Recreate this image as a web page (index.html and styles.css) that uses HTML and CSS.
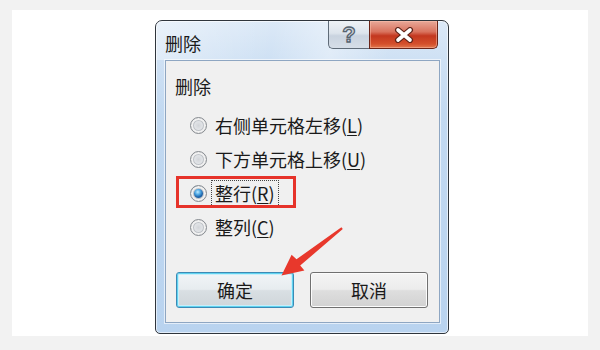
FILE: index.html
```html
<!DOCTYPE html>
<html lang="zh-CN">
<head>
    <meta charset="UTF-8">
    <meta name="viewport" content="width=device-width, initial-scale=1.0">
    <title>删除</title>
    <link rel="stylesheet" href="styles.css">
</head>
<body>
    <div class="card">
        <div class="dialog">
            <div class="titlebar">
                <span class="title">删除</span>
                <div class="caption-buttons">
                    <span class="cap-btn help">?</span>
                    <span class="cap-btn close">
                        <svg width="20" height="16" viewBox="0 0 20 16">
                            <path d="M4 3 L16 13 M16 3 L4 13" stroke="#5e2318" stroke-width="6" stroke-linecap="round"/>
                            <path d="M4 3 L16 13 M16 3 L4 13" stroke="#fff" stroke-width="3.6" stroke-linecap="round"/>
                        </svg>
                    </span>
                </div>
            </div>
            <div class="panel">
                <div class="group-label">删除</div>
                <div class="options">
                    <label class="option"><span class="radio"></span><span class="text">右侧单元格左移(<u>L</u>)</span></label>
                    <label class="option"><span class="radio"></span><span class="text">下方单元格上移(<u>U</u>)</span></label>
                    <label class="option marked"><span class="radio checked"></span><span class="text focused">整行(<u>R</u>)</span></label>
                    <label class="option"><span class="radio"></span><span class="text">整列(<u>C</u>)</span></label>
                </div>
                <div class="buttons">
                    <button class="btn default">确定</button>
                    <button class="btn">取消</button>
                </div>
            </div>
        </div>
    </div>

    <!-- annotation arrow drawn over the screenshot -->
    <svg class="arrow" width="600" height="350" viewBox="0 0 600 350">
        <polygon points="341.4,227.2 296.5,259.3 291.6,254.8 281.5,275.5 304.4,270.4 300.2,265.6 342.8,228.9" fill="#e8382c"/>
    </svg>
</body>
</html>
```

FILE: styles.css
```css
body {
    margin: 0;
    padding: 0;
    background: #f2f2f2;
    font-family: "Noto Sans CJK SC", "Liberation Sans", sans-serif;
    color: #1a1a1a;
    position: relative;
    height: 350px;
    overflow: hidden;
}
.card {
    margin: 10px 12px 0 12px;
    height: 326px;
    background: #fff;
    padding-top: 10px;
    box-sizing: border-box;
}
.dialog {
    margin-left: 143px;
    width: 294px;
    height: 314px;
    box-sizing: border-box;
    border: 1px solid #2f353c;
    border-radius: 7px 7px 5px 5px;
    background: linear-gradient(180deg, #dce9f7 0%, #cfe1f4 12%, #c2d9f1 30%, #b9d3ef 100%);
    box-shadow: inset 0 0 0 1px rgba(255, 255, 255, 0.6);
    display: flex;
    flex-direction: column;
}
.titlebar {
    height: 39px;
    display: flex;
    justify-content: space-between;
    align-items: flex-start;
    padding-left: 9px;
    padding-right: 10px;
    background: linear-gradient(100deg, rgba(255,255,255,0.4) 0%, rgba(255,255,255,0) 40%, rgba(255,255,255,0.35) 60%, rgba(255,255,255,0) 80%);
    border-radius: 6px 6px 0 0;
}
.title {
    font-size: 18px;
    line-height: 24px;
    padding-top: 10px;
}
.caption-buttons {
    display: flex;
}
.cap-btn {
    height: 28px;
    display: flex;
    align-items: center;
    justify-content: center;
    box-sizing: border-box;
    border: 1px solid #5f6b78;
    border-top: none;
}
.help {
    width: 41px;
    border-radius: 0 0 0 5px;
    border-right: none;
    background: linear-gradient(180deg, #eef2f6 0%, #dde4ec 45%, #c9d3df 55%, #d6dee8 100%);
    font-family: "Liberation Sans", sans-serif;
    font-weight: bold;
    font-size: 22px;
    color: #c9d1db;
    -webkit-text-stroke: 1.3px #56636f;
}
.close {
    width: 69px;
    border-radius: 0 0 5px 0;
    border-color: #6a2418;
    background: linear-gradient(180deg, #e8a899 0%, #d9735e 40%, #c3371f 55%, #d4502c 85%, #e2784f 100%);
    box-shadow: inset 0 0 0 1px rgba(255, 200, 180, 0.45);
}
.panel {
    margin: 0 8px 0 9px;
    height: 263px;
    box-sizing: border-box;
    background: #f0f0f0;
    border: 1px solid #8ea6c2;
    box-shadow: 0 0 0 1px rgba(255, 255, 255, 0.6);
    padding-top: 13px;
}
.group-label {
    font-size: 18px;
    line-height: 24px;
    padding-left: 9px;
    margin-bottom: 10px;
}
.option {
    display: flex;
    align-items: center;
    height: 34px;
    padding-left: 24px;
    font-size: 18px;
    position: relative;
}
.option.marked::before {
    content: "";
    position: absolute;
    left: 10px;
    top: 0;
    width: 120px;
    height: 32px;
    border: 3px solid #e6332a;
    box-sizing: border-box;
}
.radio {
    width: 17px;
    height: 17px;
    border-radius: 50%;
    box-sizing: border-box;
    border: 1px solid #868a8f;
    background: radial-gradient(circle at 50% 50%, #d2d5d9 0%, #e4e6e9 45%, #f7f7f7 70%);
    box-shadow: inset 0 0 0 2px #f1f1f1, inset 0 0 0 3px #bfc3c8;
    margin-right: 8px;
    flex-shrink: 0;
}
.radio.checked {
    background: radial-gradient(circle at 45% 40%, #bfeaff 0%, #4fa8e3 22%, #1b5fa6 42%, #2a6daa 50%, #f7f7f7 56%);
}
.text {
    line-height: 25px;
    padding: 0 3px;
    margin-left: -3px;
}
.text u {
    text-underline-offset: 2px;
}
.text.focused {
    outline: 1px dotted #444;
}
.buttons {
    display: flex;
    gap: 16px;
    margin-top: 28px;
    padding-left: 10px;
}
.btn {
    width: 118px;
    height: 36px;
    font-family: "Noto Sans CJK SC", "Liberation Sans", sans-serif;
    font-size: 18px;
    color: #1a1a1a;
    border: 1px solid #707070;
    border-radius: 3px;
    background: linear-gradient(180deg, #f4f4f4 0%, #ececec 48%, #dedede 52%, #d2d2d2 100%);
    box-shadow: inset 0 0 0 1px #fcfcfc;
    padding: 0;
}
.btn.default {
    border-color: #3c8ab5;
    box-shadow: inset 0 0 0 1px #5fd3f0, inset 0 0 0 2px #c8eefa;
    background: linear-gradient(180deg, #f1f5f7 0%, #e7ecef 48%, #d9dfe3 52%, #cfd6da 100%);
}
.arrow {
    position: absolute;
    top: 0;
    left: 0;
    pointer-events: none;
}
```
